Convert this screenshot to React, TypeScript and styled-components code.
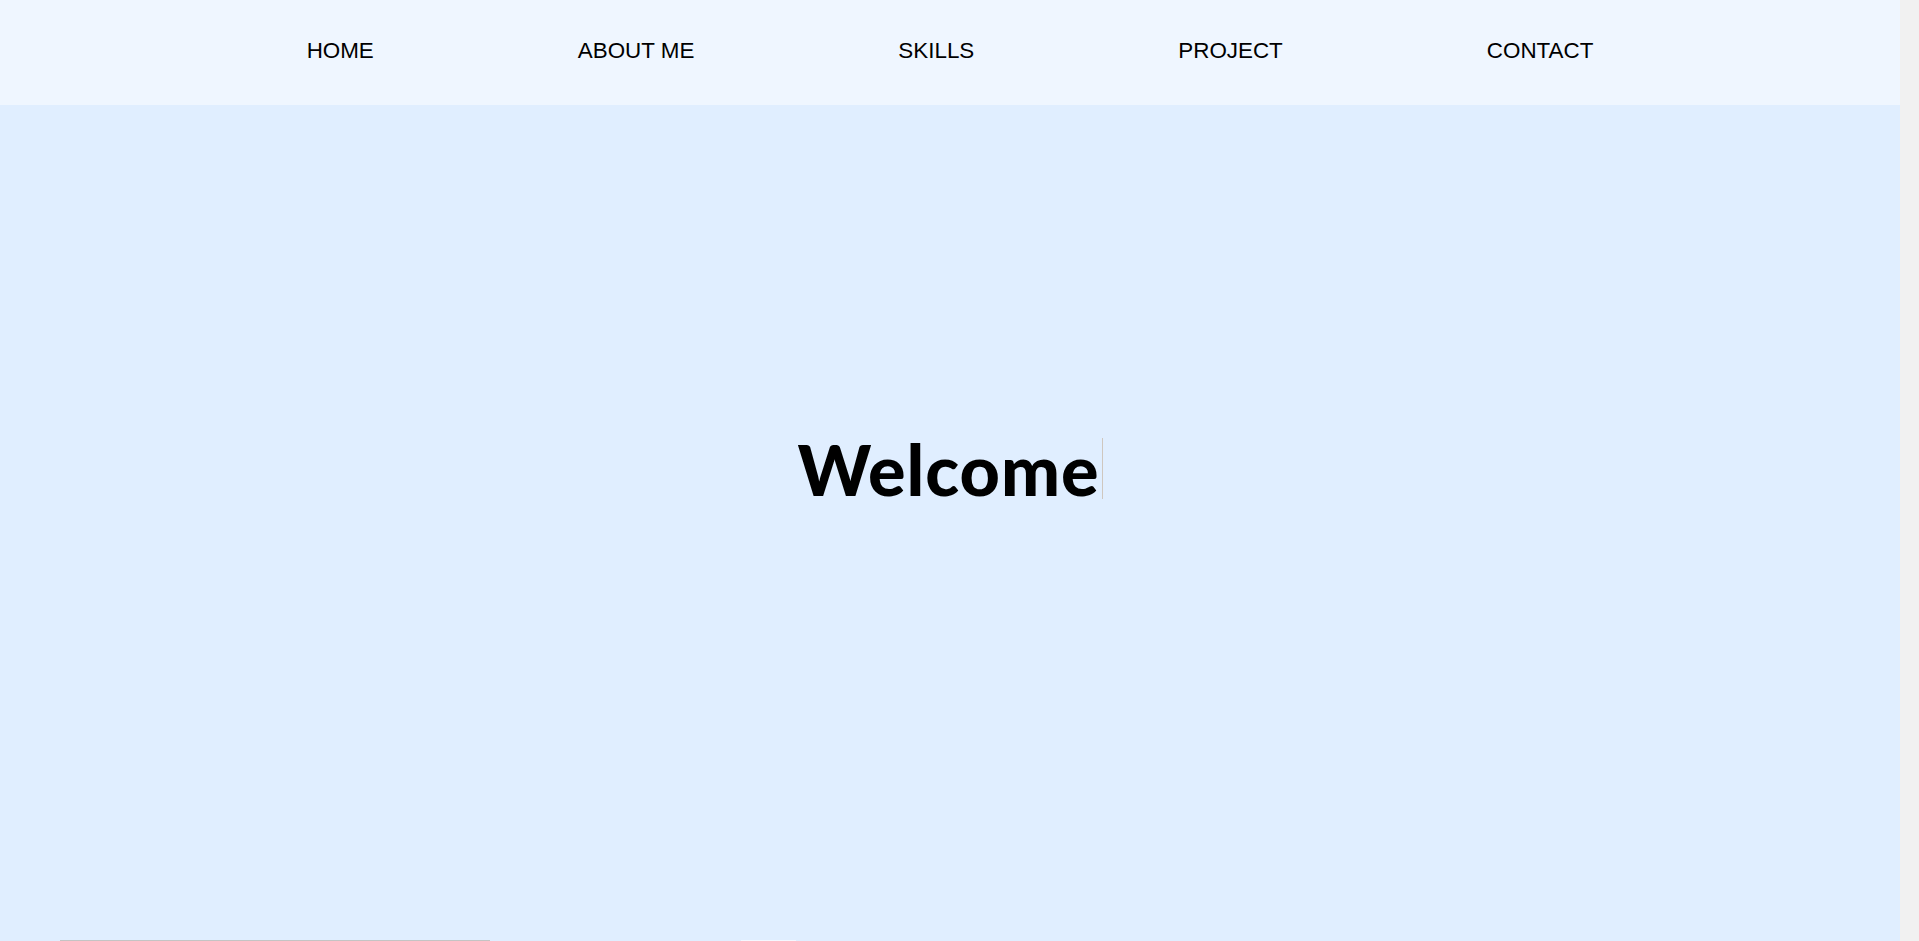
import React from "react";
import styled, { createGlobalStyle } from "styled-components";

const Global = createGlobalStyle`
  html, body { margin: 0; padding: 0; }
  body {
    font-family: "Liberation Sans", Arial, sans-serif;
    background: #f1f1f1;
    color: #000;
  }
  * { box-sizing: border-box; }
`;

const Page = styled.div`
  width: calc(100% - 19px);
  background: #e0eeff;
`;

const NavBar = styled.nav`
  height: 105px;
  background: #eff6ff;
  display: flex;
  align-items: center;
  justify-content: center;
`;

const NavList = styled.ul`
  list-style: none;
  margin: 0;
  padding: 0;
  display: flex;
  gap: 204px;
  transform: translateY(-1px);
`;

const NavItem = styled.li`
  font-size: 22.4px;
  line-height: 1;
`;

const NavLink = styled.a`
  color: #000;
  text-decoration: none;
`;

const Hero = styled.section`
  height: 835px;
  padding-bottom: 108px;
  display: flex;
  align-items: center;
  justify-content: center;
  background: #e0eeff;
`;

const Title = styled.h1`
  margin: 0;
  font-family: Lato, "DejaVu Sans", sans-serif;
  font-weight: 900;
  font-size: 70px;
  line-height: 1;
  letter-spacing: 1px;
  display: flex;
  align-items: center;
`;

const Caret = styled.span`
  display: inline-block;
  width: 1px;
  height: 61px;
  margin-left: 2px;
  background: #cfc7bf;
`;

const Section = styled.section<{ $h: number }>`
  min-height: ${(p) => p.$h}px;
  background: #e0eeff;
  padding: 0 60px;
  display: flex;
  gap: 251px;
  align-items: flex-start;
`;

const PhotoCard = styled.div`
  width: 430px;
  height: 420px;
  border-top: 1px solid #c4c4c4;
  background: #e0eeff;
`;

const Tab = styled.div`
  width: 55px;
  height: 30px;
  background: #f4f8ff;
`;

const Block = styled.section`
  min-height: 760px;
  padding: 60px;
  font-size: 20px;
`;

export default function App() {
  const items = ["HOME", "ABOUT ME", "SKILLS", "PROJECT", "CONTACT"];
  return (
    <>
      <Global />
      <Page>
        <NavBar>
          <NavList>
            {items.map((t) => (
              <NavItem key={t}>
                <NavLink href={`#${t.toLowerCase().replace(" ", "")}`}>{t}</NavLink>
              </NavItem>
            ))}
          </NavList>
        </NavBar>
        <Hero id="home">
          <Title>
            Welcome
            <Caret />
          </Title>
        </Hero>
        <Section id="aboutme" $h={760}>
          <PhotoCard />
          <Tab />
        </Section>
        <Block id="skills" />
        <Block id="project" />
        <Block id="contact" />
      </Page>
    </>
  );
}
